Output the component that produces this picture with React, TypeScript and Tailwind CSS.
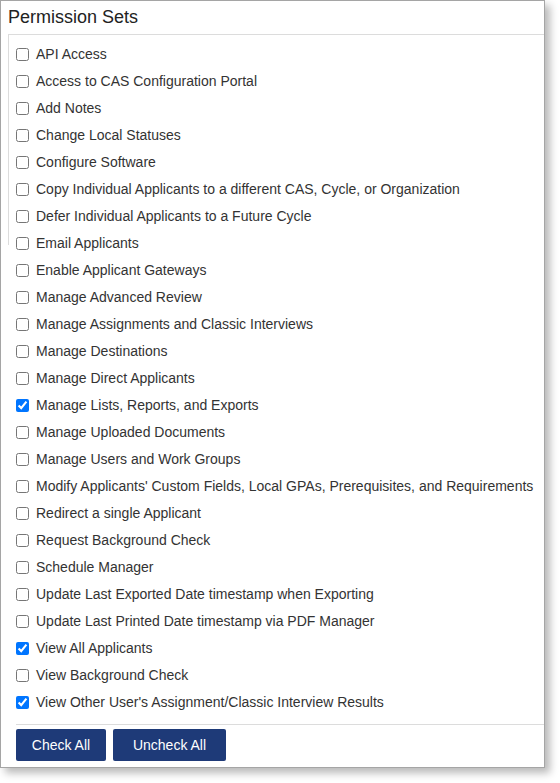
import { useState } from "react";

const PERMISSIONS = [
	"API Access",
	"Access to CAS Configuration Portal",
	"Add Notes",
	"Change Local Statuses",
	"Configure Software",
	"Copy Individual Applicants to a different CAS, Cycle, or Organization",
	"Defer Individual Applicants to a Future Cycle",
	"Email Applicants",
	"Enable Applicant Gateways",
	"Manage Advanced Review",
	"Manage Assignments and Classic Interviews",
	"Manage Destinations",
	"Manage Direct Applicants",
	"Manage Lists, Reports, and Exports",
	"Manage Uploaded Documents",
	"Manage Users and Work Groups",
	"Modify Applicants' Custom Fields, Local GPAs, Prerequisites, and Requirements",
	"Redirect a single Applicant",
	"Request Background Check",
	"Schedule Manager",
	"Update Last Exported Date timestamp when Exporting",
	"Update Last Printed Date timestamp via PDF Manager",
	"View All Applicants",
	"View Background Check",
	"View Other User's Assignment/Classic Interview Results",
];

const DEFAULT_CHECKED = [
	"Manage Lists, Reports, and Exports",
	"View All Applicants",
	"View Other User's Assignment/Classic Interview Results",
];

export default function App() {
	const [checked, setChecked] = useState<string[]>(DEFAULT_CHECKED);

	const toggle = (name: string) =>
		setChecked((c) =>
			c.includes(name) ? c.filter((n) => n !== name) : [...c, name],
		);

	return (
		<div className="min-h-screen bg-white font-['Liberation_Sans',Arial,sans-serif]">
			<div className="w-[545px] h-[768px] flex flex-col border border-[#a5a5a5] bg-white shadow-[5px_5px_8px_rgba(0,0,0,0.28)]">
				<h2 className="h-[33px] pl-[7px] pt-[3px] text-[18px] leading-[26px] text-[#222]">
					Permission Sets
				</h2>
				<div className="relative ml-[7px] flex-1 border-t border-[#dcdcdc] pt-[6px]">
					{/* leftover inner border, only on the upper part */}
					<span className="absolute left-0 top-0 h-[210px] border-l border-[#dcdcdc]" />
					<ul className="flex flex-col">
						{PERMISSIONS.map((p) => (
							<li key={p} className="h-[27px] flex items-center pl-[4px]">
								<label className="flex items-center text-[14px] text-[#333] whitespace-nowrap">
									<input
										type="checkbox"
										className="m-0 ml-[4px] mr-[7px] w-[13px] h-[13px]"
										checked={checked.includes(p)}
										onChange={() => toggle(p)}
									/>
									{p}
								</label>
							</li>
						))}
					</ul>
				</div>
				<div className="ml-[15px] border-t border-[#dcdcdc] pt-[4px] pb-[6px] flex gap-[7px]">
					<button
						type="button"
						className="h-[32px] w-[90px] rounded-[2px] bg-[#1e3a78] text-[14px] text-white"
						onClick={() => setChecked(PERMISSIONS)}
					>
						Check All
					</button>
					<button
						type="button"
						className="h-[32px] w-[113px] rounded-[2px] bg-[#1e3a78] text-[14px] text-white"
						onClick={() => setChecked([])}
					>
						Uncheck All
					</button>
				</div>
			</div>
		</div>
	);
}
